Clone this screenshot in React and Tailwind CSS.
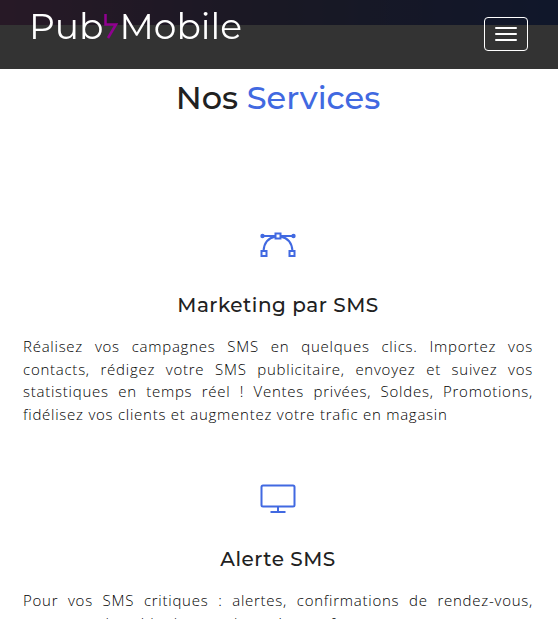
const services = [
  {
    title: "Marketing par SMS",
    icon: "vector",
    text: "Réalisez vos campagnes SMS en quelques clics. Importez vos contacts, rédigez votre SMS publicitaire, envoyez et suivez vos statistiques en temps réel ! Ventes privées, Soldes, Promotions, fidélisez vos clients et augmentez votre trafic en magasin",
  },
  {
    title: "Alerte SMS",
    icon: "screen",
    text: "Pour vos SMS critiques : alertes, confirmations de rendez-vous, messages de solde de carte bancaire, en format court",
  },
];

function ServiceIcon({ name }) {
  return (
    <svg
      className="h-9 w-9 text-[#4169e1]"
      viewBox="0 0 36 36"
      fill="none"
      stroke="currentColor"
      strokeWidth="2"
      aria-hidden="true"
    >
      {name === "vector" ? (
        <>
          <path d="M3 9h12M21 9h12M15.500 9.500C8 11 4 16 3.500 24M20.500 9.500C28 11 32 16 32.500 24" />
          <circle cx="2.500" cy="9" r="2.200" fill="currentColor" stroke="none" />
          <circle cx="33.500" cy="9" r="2.200" fill="currentColor" stroke="none" />
          <rect x="15.500" y="6.500" width="5" height="5" />
          <rect x="1.500" y="24" width="5" height="5" />
          <rect x="29.500" y="24" width="5" height="5" />
        </>
      ) : (
        <>
          <rect x="1.500" y="4.500" width="33" height="21" rx="1.500" />
          <path d="M18 25.500v5M10.500 31h15" />
        </>
      )}
    </svg>
  );
}

export default function App() {
  return (
    <div className="h-screen overflow-hidden bg-white font-['Open_Sans','Noto_Sans',sans-serif] text-[#212121]">
      <header className="fixed inset-x-0 top-0 z-10 flex h-[69px] items-start justify-between bg-black/80 pl-[29px] pr-[30px]">
        <a
          href="#accueil"
          className="flex items-center pt-px font-[Montserrat,Inter,sans-serif] text-[36px] leading-[50px] text-white"
        >
          <span>Pub</span>
          <svg className="h-7 w-4" viewBox="0 0 16 28" fill="none" stroke="#900090" strokeWidth="2.500" aria-hidden="true">
            <path d="M2.500 2v10.500H13L5 26" />
          </svg>
          <span>Mobile</span>
        </a>
        <button
          type="button"
          aria-label="Menu"
          className="mt-[17px] flex h-[34px] w-11 flex-col items-center justify-center gap-1 rounded border border-white"
        >
          <span className="h-[2px] w-[22px] rounded-[1px] bg-white" />
          <span className="h-[2px] w-[22px] rounded-[1px] bg-white" />
          <span className="h-[2px] w-[22px] rounded-[1px] bg-white" />
        </button>
      </header>
      <div className="h-[25px] bg-linear-to-r from-[#c37dbe] via-[#7d78b4] to-[#5073d2]" />
      <main className="pl-[23px] pr-[25px]">
        <h2 className="pt-[49px] text-center font-[Montserrat,Inter,sans-serif] text-[32px] font-medium leading-[48px]">
          Nos <span className="text-[#4169e1]">Services</span>
        </h2>
        <div className="flex flex-col gap-14 pt-[105px]">
          {services.map((s) => (
            <section key={s.title} className="flex flex-col items-center">
              <ServiceIcon name={s.icon} />
              <h3 className="pt-[28px] font-[Montserrat,Inter,sans-serif] text-[20px] font-medium leading-[28px] tracking-wide">
                {s.title}
              </h3>
              <p className="pt-4 text-justify text-[15px] leading-normal font-light tracking-wider text-black">
                {s.text}
              </p>
            </section>
          ))}
        </div>
      </main>
    </div>
  );
}
